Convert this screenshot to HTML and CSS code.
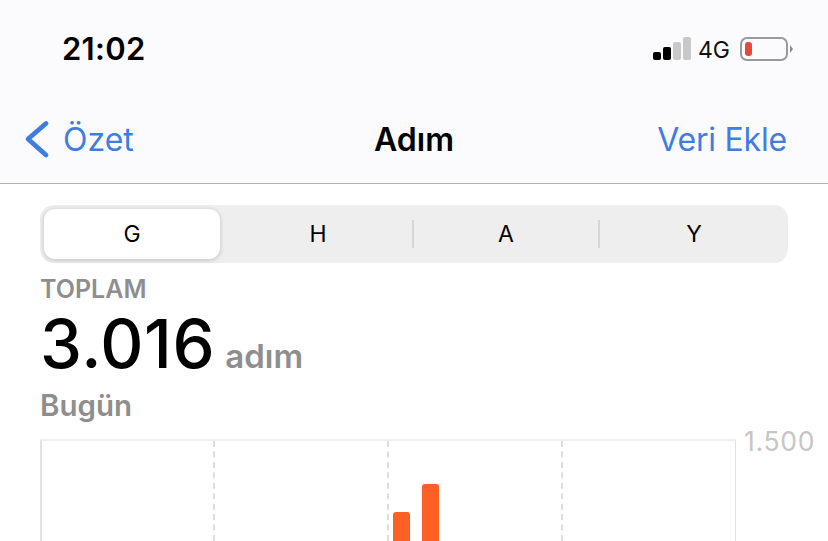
FILE: index.html
```html
<!DOCTYPE html>
<html lang="tr">
<head>
<meta charset="utf-8">
<title>Adım</title>
<link rel="stylesheet" href="styles.css">
</head>
<body>
<header class="top">
  <div class="status">
    <span class="time">21:02</span>
    <div class="indicators">
      <div class="signal"><i class="s1"></i><i class="s2"></i><i class="s3"></i><i class="s4"></i></div>
      <span class="net">4G</span>
      <div class="battery"><div class="battery-body"><i class="battery-level"></i></div><i class="battery-cap"></i></div>
    </div>
  </div>
  <nav class="nav">
    <a class="back">
      <svg class="chevron" width="26" height="40" viewBox="0 0 26 40"><path d="M22 3.500 L4 19 L22 35" fill="none" stroke="#3f7de0" stroke-width="4.800" stroke-linecap="round" stroke-linejoin="round"/></svg>
      <span>Özet</span>
    </a>
    <h1 class="title">Adım</h1>
    <a class="add">Veri Ekle</a>
  </nav>
</header>
<main class="content">
  <div class="segments">
    <div class="seg seg-on">G</div>
    <div class="seg seg-h">H</div>
    <div class="seg seg-div seg-a">A</div>
    <div class="seg seg-div seg-y">Y</div>
  </div>
  <div class="label">TOPLAM</div>
  <div class="total"><span class="num">3.016</span><span class="unit">adım</span></div>
  <div class="day">Bugün</div>
  <div class="chart-row">
    <div class="chart">
      <div class="col"></div>
      <div class="col"></div>
      <div class="col bars"><i class="bar b1"></i><i class="bar b2"></i></div>
      <div class="col"></div>
    </div>
    <span class="axis">1.500</span>
  </div>
</main>
</body>
</html>
```
FILE: styles.css
```css
* { box-sizing: border-box; }
html, body { margin: 0; padding: 0; }
body {
  width: 828px;
  height: 541px;
  overflow: hidden;
  background: #fff;
  font-family: Inter, "Liberation Sans", sans-serif;
  color: #000;
}
.top {
  height: 184px;
  background: #fbfbfe;
  border-bottom: 1px solid #b2b2b2;
}
.status {
  height: 120px;
  display: flex;
  justify-content: space-between;
  padding: 30px 35px 0 62px;
}
.time { font-size: 31px; font-weight: 600; line-height: 38px; letter-spacing: 0.3px; }
.indicators { display: flex; align-items: flex-start; height: 40px; padding-top: 6px; }
.signal { display: flex; align-items: flex-end; gap: 2px; height: 24px; }
.signal i { display: block; width: 8px; border-radius: 2px; }
.s1 { height: 8px; background: #000; }
.s2 { height: 13px; background: #000; }
.s3 { height: 18px; background: #c8c8c8; }
.s4 { height: 23px; background: #c8c8c8; }
.net { font-size: 23px; line-height: 26px; margin-left: 7px; margin-top: 1px; font-weight: 400; color: #111; }
.battery { display: flex; align-items: center; margin-left: 10px; height: 26px; }
.battery-body {
  width: 48px; height: 24px;
  border: 2px solid #9a9a9a;
  border-radius: 7px;
  padding: 3px;
}
.battery-level { display: block; width: 7px; height: 14px; background: #e5493a; border-radius: 3px; }
.battery-cap { width: 0; height: 0; margin-left: 2px; border-left: 3px solid #8a8a8a; border-top: 4px solid transparent; border-bottom: 4px solid transparent; }
.nav {
  height: 63px;
  display: flex;
  align-items: flex-start;
  justify-content: space-between;
  padding: 0 41px 0 24px;
}
.back, .add { color: #3f7de0; font-size: 32px; line-height: 40px; }
.back { display: flex; align-items: center; gap: 13px; width: 257px; }
.add { width: 240px; text-align: right; letter-spacing: -0.2px; }
.title { margin: 0; font-size: 32px; font-weight: 600; line-height: 40px; }
.content { padding: 21px 0 0 40px; }
.segments {
  width: 748px;
  height: 58px;
  background: #eeeeee;
  border-radius: 14px;
  padding: 4px;
  display: grid;
  grid-template-columns: 176px 192px 186px 186px;
}
.seg {
  display: flex; align-items: center; justify-content: center;
  font-size: 23px; line-height: 50px; position: relative;
}
.seg-h { padding-left: 4px; }
.seg-a { padding-left: 2px; }
.seg-y { padding-left: 6px; }
.seg-on {
  background: #fff;
  border-radius: 11px;
  box-shadow: 0 1px 5px rgba(0, 0, 0, 0.2);
}
.seg-div::before {
  content: "";
  position: absolute;
  left: 0; top: 11px;
  width: 2px; height: 28px;
  background: #d6d6d6;
}
.label { margin-top: 12px; font-size: 25px; font-weight: 600; line-height: 28px; color: #8e8e8e; }
.total { display: flex; align-items: baseline; height: 79px; padding-top: 3px; }
.num { font-size: 67px; font-weight: 500; line-height: 76px; letter-spacing: 0.6px; }
.unit { font-size: 33px; font-weight: 600; color: #8e8e8e; margin-left: 10px; }
.day { margin-top: 7px; font-size: 29.500px; font-weight: 600; line-height: 32px; color: #8e8e8e; }
.chart-row { display: flex; align-items: flex-start; margin-top: 18px; }
.chart {
  width: 696px;
  height: 102px;
  display: grid;
  grid-template-columns: 173px 174px 174px 174px;
  border-top: 2px solid #efefef;
  border-left: 2px solid #e2e2e2;
  border-right: 1px solid #e2e2e2;
}
.col { border-right: 2px dashed #dedede; }
.col:last-child { border-right: 0; }
.bars { display: flex; align-items: flex-end; gap: 12px; padding-left: 4px; }
.bar { display: block; width: 17px; background: #fd5f25; border-radius: 3px 3px 0 0; }
.b1 { height: 29px; }
.b2 { height: 57px; }
.axis { font-size: 26.500px; line-height: 30px; color: #c6c6c6; margin-left: 8px; margin-top: -13px; letter-spacing: 0.7px; }
```
